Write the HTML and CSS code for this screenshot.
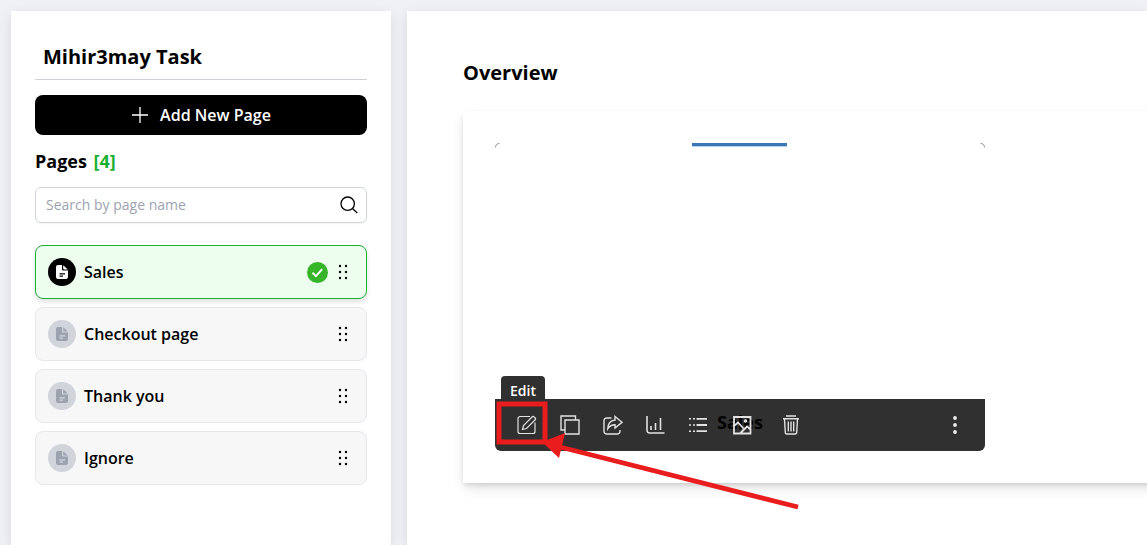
FILE: index.html
```html
<!DOCTYPE html>
<html lang="en">
<head>
<meta charset="utf-8">
<meta name="viewport" content="width=device-width, initial-scale=1">
<title>Mihir3may Task</title>
<link rel="stylesheet" href="styles.css">
</head>
<body>
<svg class="sprite" aria-hidden="true">
  <symbol id="doc" viewBox="0 0 12 14">
    <path fill-rule="evenodd" d="M2 0h4v4.500q0 1 1 1h5v6.500a2 2 0 0 1-2 2H2a2 2 0 0 1-2-2V2a2 2 0 0 1 2-2ZM3.500 8.300v1.200h5.500V8.300ZM3.500 10.600v1.200h3.500v-1.200Z"/>
    <path d="M7.200.2 11.800 4.500H8.200q-1 0-1-1Z"/>
  </symbol>
  <symbol id="grip" viewBox="0 0 10 16">
    <circle cx="2" cy="2" r="1.200"/><circle cx="8" cy="2" r="1.200"/><circle cx="2" cy="8" r="1.200"/><circle cx="8" cy="8" r="1.200"/><circle cx="2" cy="14" r="1.200"/><circle cx="8" cy="14" r="1.200"/>
  </symbol>
</svg>
<div class="layout">
  <aside class="sidebar">
    <h1 class="project-title">Mihir3may Task</h1>
    <button class="add-page" type="button">
      <svg width="18" height="18" viewBox="0 0 18 18"><path d="M9 1v16M1 9h16" fill="none" stroke="#fff" stroke-width="1.300"/></svg>
      Add New Page
    </button>
    <h2 class="pages-title">Pages <span class="pages-count">[4]</span></h2>
    <div class="search">
      <input class="search-input" type="text" aria-label="Search by page name" placeholder="Search by page name">
      <svg class="search-icon" width="18" height="18" viewBox="0 0 18 18" fill="none" stroke="#000" stroke-width="1.300"><circle cx="7.700" cy="7.700" r="6.700"/><path d="m12.500 12.500 4.800 4.500"/></svg>
    </div>
    <ul class="page-list">
      <li class="page-item page-item-active">
        <span class="page-icon"><svg width="12" height="14"><use href="#doc"/></svg></span>
        <span class="page-name">Sales</span>
        <svg width="21" height="21" viewBox="0 0 21 21"><circle cx="10.500" cy="10.500" r="10.500" fill="#36b52b"/><path d="m5.500 10.800 3.400 3.300 6.300-6.900" fill="none" stroke="#fff" stroke-width="2"/></svg>
        <button class="grip" type="button" aria-label="Move Sales"><svg width="10" height="16"><use href="#grip"/></svg></button>
      </li>
      <li class="page-item">
        <span class="page-icon"><svg width="12" height="14"><use href="#doc"/></svg></span>
        <span class="page-name">Checkout page</span>
        <button class="grip" type="button" aria-label="Move Checkout page"><svg width="10" height="16"><use href="#grip"/></svg></button>
      </li>
      <li class="page-item">
        <span class="page-icon"><svg width="12" height="14"><use href="#doc"/></svg></span>
        <span class="page-name">Thank you</span>
        <button class="grip" type="button" aria-label="Move Thank you"><svg width="10" height="16"><use href="#grip"/></svg></button>
      </li>
      <li class="page-item">
        <span class="page-icon"><svg width="12" height="14"><use href="#doc"/></svg></span>
        <span class="page-name">Ignore</span>
        <button class="grip" type="button" aria-label="Move Ignore"><svg width="10" height="16"><use href="#grip"/></svg></button>
      </li>
    </ul>
  </aside>
  <main class="content">
    <h2 class="overview-title">Overview</h2>
    <section class="card">
      <div class="preview">
        <svg class="thumbnail" viewBox="0 0 490 256" aria-hidden="true">
          <path d="M.5 4.500V4A3.500 3.500 0 0 1 4 .5h.5M485.500.5h.5A3.500 3.500 0 0 1 489.500 4v.5" fill="none" stroke="#999"/>
          <path d="M197 0h95v3h-95z" fill="#3a78b5"/><path d="M197 3h95v1h-95z" fill="#b9d3ea"/>
        </svg>
        <div class="toolbar">
          <span class="preview-name">Sales</span>
          <button class="tool" type="button" aria-label="Edit"><svg width="20" height="20" viewBox="0 0 20 20"><path d="M13 1.500H3A2 2 0 0 0 1 3.500v13a2 2 0 0 0 2 2h13a2 2 0 0 0 2-2V7.500M5.500 14.500l1-4 8.800-8.700a1.200 1.200 0 0 1 1.700 0l1.200 1.200a1.200 1.200 0 0 1 0 1.700L9.500 13.500Z" stroke-width="1.200"/></svg></button>
          <button class="tool" type="button" aria-label="Duplicate"><svg width="20" height="20" viewBox="0 0 20 20"><path d="M5 5h14v14H5zM15.500 5V1H1v14h4"/></svg></button>
          <button class="tool" type="button" aria-label="Share"><svg width="20" height="20" viewBox="0 0 20 20"><path d="M8.500 3H3.700A2.700 2.700 0 0 0 1 5.700v10.600A2.700 2.700 0 0 0 3.700 19h10.600a2.700 2.700 0 0 0 2.700-2.700V15M12 1.500l7 5.800-7 5.700V9.700c-3 0-5.300 1-7.200 4C5 8.800 7.500 5.500 12 5Z"/></svg></button>
          <button class="tool" type="button" aria-label="Statistics"><svg width="20" height="20" viewBox="0 0 20 20"><path d="M1 1v14.500A2.500 2.500 0 0 0 3.500 18H18.500M5 15V11M9.500 15V8M14.500 15V3" stroke-width="1.600"/></svg></button>
          <button class="tool" type="button" aria-label="List"><svg width="20" height="20" viewBox="0 0 20 20"><path d="M7.500 3.800H18M7.500 10H18M7.500 16.200H18" stroke-width="1.800"/><path d="M0 3.800h2m2 0h2M0 10h2m2 0h2M0 16.200h2m2 0h2" stroke-width="1.600"/></svg></button>
          <button class="tool" type="button" aria-label="Image"><svg width="20" height="20" viewBox="0 0 20 20"><path d="M2 2h16.500v16.500H2zM2 11l4-3.500 5.500 6M8 18.500l7-7 3.500 3" stroke-width="1.800"/><circle cx="13.500" cy="6" r="1" stroke-width="1.600"/></svg></button>
          <button class="tool tool-delete" type="button" aria-label="Delete"><svg width="20" height="20" viewBox="0 0 20 20"><path d="M2 3.800h16M5 1h10M3.500 4l.8 13.500A1.500 1.500 0 0 0 5.800 19h8.400a1.500 1.500 0 0 0 1.500-1.500L16.500 4M7.300 6.500v10M10 6.500v10M12.700 6.500v10"/></svg></button>
          <button class="tool tool-more" type="button" aria-label="More"><svg width="20" height="20" viewBox="0 0 20 20"><g fill="#eee" stroke="none"><circle cx="10" cy="3" r="1.900"/><circle cx="10" cy="10" r="1.900"/><circle cx="10" cy="17" r="1.900"/></g></svg></button>
        </div>
        <span class="tooltip" role="tooltip">Edit</span>
        <svg class="pointer" width="310" height="116" viewBox="0 0 310 116" aria-hidden="true">
          <path d="M4 9h46v38H4z" fill="none" stroke="#e91d1d" stroke-width="5"/>
          <path d="M61 51 303 112" fill="none" stroke="#e91d1d" stroke-width="4.800"/>
          <path d="M47 47 70 38 64 63Z" fill="#e91d1d"/>
        </svg>
      </div>
    </section>
  </main>
</div>
</body>
</html>
```
FILE: styles.css
```css
* { box-sizing: border-box; }
body {
  margin: 0;
  background: #f0f1f7;
  color: #000;
  font-family: "Open Sans", sans-serif;
  font-size: 16px;
  line-height: 24px;
}
h1, h2, ul { margin: 0; padding: 0; }
button { border: 0; padding: 0; font: inherit; cursor: pointer; }
svg { display: block; flex: none; }
.sprite { position: absolute; width: 0; height: 0; }
.layout {
  display: grid;
  grid-template-columns: 380px minmax(0, 1fr);
  gap: 16px;
  min-height: 100vh;
  padding: 11px 0 0 11px;
}
.sidebar {
  padding: 24px;
  background: #fff;
  box-shadow: 0 4px 12px rgba(0, 0, 0, .1);
}
.project-title {
  padding: 8px;
  border-bottom: 1px solid #d1d1d8;
  font-size: 20px;
  line-height: 28px;
  font-weight: 700;
}
.add-page {
  display: flex;
  align-items: center;
  justify-content: center;
  gap: 11px;
  width: 100%;
  height: 40px;
  margin-top: 15px;
  border-radius: 8px;
  background: #000;
  color: #fff;
  font-weight: 600;
}
.pages-title {
  margin: 13px 0;
  font-size: 18px;
  line-height: 26px;
  font-weight: 700;
}
.pages-count { margin-left: 2px; color: #18b132; }
.search {
  display: flex;
  align-items: center;
  height: 36px;
  padding: 0 8px 0 10px;
  border: 1px solid #d1d5db;
  border-radius: 6px;
  box-shadow: 0 1px 2px rgba(0, 0, 0, .05);
}
.search-input {
  flex: 1;
  min-width: 0;
  border: 0;
  padding: 0;
  outline: 0;
  background: none;
  font: inherit;
  font-size: 14px;
}
.search-input::placeholder { color: #9ca3af; }
.page-list {
  display: grid;
  gap: 8px;
  margin-top: 22px;
  list-style: none;
}
.page-item {
  display: flex;
  align-items: center;
  gap: 8px;
  height: 54px;
  padding: 0 18px 0 12px;
  border: 1px solid #e5e7eb;
  border-radius: 8px;
  background: #f7f7f7;
  font-weight: 600;
}
.page-item-active {
  border-color: #18b132;
  background: #edfeef;
  box-shadow: 0 3px 5px rgba(0, 0, 0, .12);
}
.page-icon {
  display: grid;
  place-items: center;
  width: 28px;
  height: 28px;
  border-radius: 50%;
  background: #d1d5db;
  fill: #9ca3af;
}
.page-item-active .page-icon { background: #000; fill: #fff; }
.page-name { flex: 1; }
.grip { margin-left: 2px; background: none; }
.content {
  padding: 48px 0 48px 56px;
  overflow: hidden;
  background: #fff;
  box-shadow: 0 4px 12px rgba(0, 0, 0, .1);
}
.overview-title { font-size: 20px; line-height: 28px; font-weight: 700; }
.card {
  margin: 24px -16px 0 0;
  padding: 32px;
  background: #fff;
  box-shadow: 0 6px 14px -2px rgba(0, 0, 0, .12), 0 3px 5px -1px rgba(0, 0, 0, .12);
}
.preview { position: relative; max-width: 490px; }
.thumbnail { width: 100%; }
.toolbar {
  position: relative;
  display: flex;
  align-items: center;
  gap: 23px;
  height: 52px;
  padding: 0 20px 0 22px;
  border-radius: 0 0 6px 6px;
  background: #303030;
}
.preview-name {
  position: absolute;
  inset: 10px 0 auto;
  text-align: center;
  font-size: 18px;
  line-height: 26px;
  font-weight: 700;
}
.tool {
  position: relative;
  background: none;
  fill: none;
  stroke: #e2e2e2;
  stroke-width: 1.400px;
}
.tool-delete { margin-left: 6px; }
.tool-more { margin-left: auto; }
.tooltip {
  position: absolute;
  left: 6px;
  bottom: 46px;
  padding: 5px 9px;
  border-radius: 4px;
  background: #303030;
  color: #fff;
  font-size: 14px;
  line-height: 19px;
  font-weight: 600;
}
.pointer { position: absolute; left: 0; bottom: -60px; }
```
